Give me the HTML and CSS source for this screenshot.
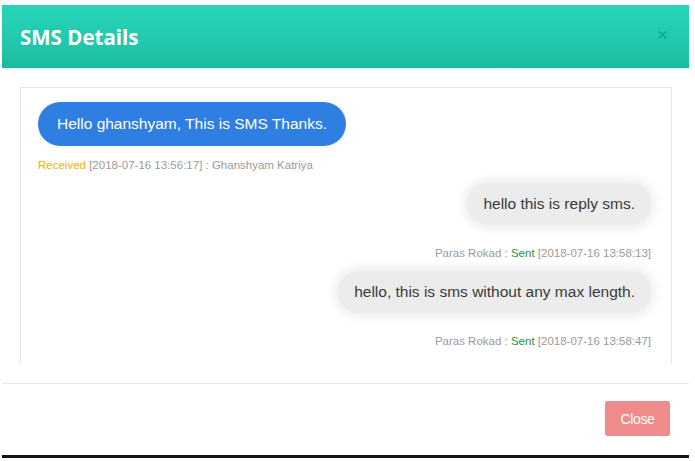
FILE: index.html
```html
<!DOCTYPE html>
<html>
<head>
<meta charset="utf-8">
<link rel="stylesheet" href="styles.css">
</head>
<body>
<div class="modal">
  <div class="modal-header">
    <h4 class="modal-title">SMS Details</h4>
    <span class="close">&times;</span>
  </div>
  <div class="modal-body">
    <div class="chat">
      <div class="msg received">
        <div class="bubble blue">Hello ghanshyam, This is SMS Thanks.</div>
        <div class="meta"><span class="st-recv">Received</span> [2018-07-16 13:56:17] : Ghanshyam Katriya</div>
      </div>
      <div class="msg sent">
        <div class="bubble gray">hello this is reply sms.</div>
        <div class="meta">Paras Rokad : <span class="st-sent">Sent</span> [2018-07-16 13:58:13]</div>
      </div>
      <div class="msg sent">
        <div class="bubble gray">hello, this is sms without any max length.</div>
        <div class="meta">Paras Rokad : <span class="st-sent">Sent</span> [2018-07-16 13:58:47]</div>
      </div>
    </div>
  </div>
  <div class="modal-footer">
    <button class="btn-close">Close</button>
  </div>
</div>
</body>
</html>
```

FILE: styles.css
```css
html, body {
  margin: 0;
  padding: 0;
  background: #ffffff;
}
body {
  font-family: "Liberation Sans", Arial, sans-serif;
}
.modal {
  margin: 5px 0 0 2px;
  width: 687px;
  background: #fff;
  border-bottom: 3px solid #141414;
}
.modal-header {
  height: 63px;
  display: flex;
  align-items: center;
  justify-content: space-between;
  padding: 0 21px 0 18px;
  background: linear-gradient(to bottom, #26d4b8 0%, #22c8ac 60%, #1cb99e 100%);
  box-sizing: border-box;
  box-shadow: 0 2px 2px rgba(30, 200, 170, 0.12);
}
.modal-title {
  margin: 0;
  color: #ffffff;
  font-family: "Open Sans", sans-serif;
  font-weight: 700;
  font-size: 20.5px;
  letter-spacing: 0;
  line-height: 24px;
}
.close {
  color: #13a088;
  font-size: 19px;
  line-height: 18px;
  opacity: 0.85;
  margin-top: -4px;
}
.modal-body {
  padding: 19px 17px 19px 18px;
}
.chat {
  height: 277px;
  overflow: hidden;
  border: 1px solid #e6e6e6;
  border-bottom: none;
  padding: 14px 20px 0 17px;
  box-sizing: border-box;
  display: flex;
  flex-direction: column;
}
.msg {
  display: flex;
  flex-direction: column;
}
.msg.received {
  align-items: flex-start;
}
.msg.sent {
  align-items: flex-end;
}
.bubble {
  font-size: 15.5px;
  line-height: 19px;
  border-radius: 22px;
}
.bubble.blue {
  background: #2f7ee2;
  color: #ffffff;
  padding: 12px 19px 13px 19px;
}
.bubble.gray {
  background: #ececec;
  color: #3a3a3a;
  padding: 11px 16px 12px 16px;
  margin-top: 11px;
  box-shadow: 0 0 9px 5px #f0f0f0;
}
.meta {
  font-size: 11.5px;
  line-height: 13px;
  color: #9a9a9a;
}
.received .meta {
  margin-top: 13px;
}
.sent .meta {
  margin-top: 22px;
}
.st-recv {
  color: #eeb000;
}
.st-sent {
  color: #2e8f3a;
}
.modal-footer {
  border-top: 1px solid #e8e8e8;
  padding: 17px 19px 19px 0;
  display: flex;
  justify-content: flex-end;
}
.btn-close {
  width: 65px;
  height: 35px;
  border: none;
  border-radius: 3px;
  background: #ef8b8b;
  color: #ffffff;
  font-family: "Liberation Sans", Arial, sans-serif;
  font-size: 14px;
  letter-spacing: -0.4px;
  padding: 0;
}
```
